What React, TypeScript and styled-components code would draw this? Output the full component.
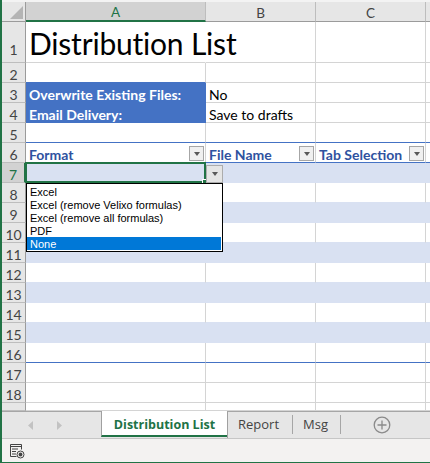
import React from 'react';
import styled, { createGlobalStyle } from 'styled-components';

const GREEN = '#217346';
const GRID = '#d4d4d4';
const BAND = '#d9e1f2';
const ACCENT = '#4472c4';
const TBL = '#4472c4';
const HEAD_BG = '#e6e6e6';
const HEAD_ACTIVE = '#d2d2d2';
const HEAD_LINE = '#bdbdbd';
const HEAD_EDGE = '#9b9b9b';

const Global = createGlobalStyle`
  html, body { margin: 0; padding: 0; background: #fff; }
  body { width: 430px; height: 463px; overflow: hidden; }
  *, *::before, *::after { box-sizing: border-box; }
`;

const Window = styled.div`
  width: 430px;
  height: 463px;
  display: flex;
  flex-direction: column;
  border-left: 2px solid ${GREEN};
  border-bottom: 1px solid ${GREEN};
  padding-top: 2px;
  background: #f3f3f3;
  overflow: hidden;
  font-family: Lato, 'Liberation Sans', sans-serif;
`;

const Sheet = styled.div`
  flex: 1;
  min-height: 0;
  display: grid;
  position: relative;
  overflow: hidden;
  background: #fff;
  grid-template-columns: 24px 180px 110px 110px 1fr;
  grid-template-rows: 20px 41px repeat(17, 20px) 1fr;
`;

const Corner = styled.div`
  background: ${HEAD_BG};
  border-right: 1px solid ${HEAD_EDGE};
  border-bottom: 1px solid ${HEAD_EDGE};
  display: flex;
  align-items: flex-end;
  justify-content: flex-end;
  padding: 0 2px 2px 0;
`;

const ColHead = styled.div<{ $active?: boolean }>`
  background: ${(p) => (p.$active ? HEAD_ACTIVE : HEAD_BG)};
  border-right: 1px solid ${HEAD_LINE};
  border-bottom: ${(p) => (p.$active ? `2px solid ${GREEN}` : `1px solid ${HEAD_EDGE}`)};
  color: ${(p) => (p.$active ? GREEN : '#444')};
  display: flex;
  align-items: center;
  justify-content: center;
  font-size: 13.5px;
  padding-top: 2px;
`;

const RowHead = styled.div<{ $active?: boolean; $tall?: boolean }>`
  background: ${(p) => (p.$active ? HEAD_ACTIVE : HEAD_BG)};
  border-right: ${(p) => (p.$active ? `2px solid ${GREEN}` : `1px solid ${HEAD_EDGE}`)};
  border-bottom: 1px solid ${HEAD_LINE};
  color: ${(p) => (p.$active ? GREEN : '#444')};
  display: flex;
  align-items: flex-end;
  justify-content: center;
  font-size: 14px;
  line-height: 13px;
  padding-bottom: ${(p) => (p.$tall ? 6 : 1)}px;
`;

const Cell = styled.div<{ $fill?: string; $b: string; $r: string; $over?: boolean }>`
  position: relative;
  min-width: 0;
  background: ${(p) => p.$fill ?? '#fff'};
  border-right: 1px solid ${(p) => p.$r};
  border-bottom: 1px solid ${(p) => p.$b};
  display: flex;
  align-items: flex-end;
  justify-content: space-between;
  padding: 0 1px 0 3px;
  white-space: nowrap;
  overflow: ${(p) => (p.$over ? 'visible' : 'hidden')};
  z-index: ${(p) => (p.$over ? 2 : 'auto')};
  font-size: 14px;
  line-height: 13px;
  color: #000;
`;

const Title = styled.span`
  font-size: 30px;
  line-height: 36px;
  letter-spacing: -0.2px;
  color: #000;
  margin-bottom: 1px;
`;

const Label = styled.span<{ $white?: boolean }>`
  font-weight: ${(p) => (p.$white ? 700 : 400)};
  color: ${(p) => (p.$white ? '#fff' : '#000')};
  padding-bottom: 1px;
`;

const HeadText = styled.span`
  font-weight: 700;
  color: #2f52a0;
  padding-bottom: 1px;
`;

const FilterBtn = styled.span`
  width: 15px;
  height: 15px;
  margin-bottom: 1px;
  border: 1px solid #a6a6a6;
  background: #f0f0f0;
  display: flex;
  align-items: center;
  justify-content: center;
  flex-shrink: 0;
  &::after {
    content: '';
    border-left: 3.5px solid transparent;
    border-right: 3.5px solid transparent;
    border-top: 4px solid #595959;
  }
`;

const Selection = styled.span`
  position: absolute;
  left: -1px;
  top: -1px;
  right: -1px;
  bottom: -1px;
  border: 2px solid ${GREEN};
  pointer-events: none;
  &::after {
    content: '';
    position: absolute;
    right: -4px;
    bottom: -4px;
    width: 6px;
    height: 6px;
    background: ${GREEN};
    border: 1px solid #fff;
  }
`;

const Popup = styled.div`
  position: absolute;
  left: 0;
  top: 0;
  width: 100%;
  height: 100%;
  z-index: 5;
`;

const ValidationBtn = styled.span`
  position: absolute;
  left: calc(100% + 1px);
  top: 2px;
  width: 17px;
  height: 18px;
  border: 1px solid #acacac;
  background: #e5e5e5;
  display: flex;
  align-items: center;
  justify-content: center;
  &::after {
    content: '';
    border-left: 3.5px solid transparent;
    border-right: 3.5px solid transparent;
    border-top: 4px solid #595959;
  }
`;

const List = styled.ul`
  position: absolute;
  left: 0;
  top: calc(100% + 1px);
  width: 197px;
  margin: 0;
  padding: 1px 1px 1px 0;
  list-style: none;
  background: #fff;
  border: 1px solid #000;
  font-family: 'Liberation Sans', Arial, sans-serif;
  font-size: 11px;
`;

const Item = styled.li<{ $selected?: boolean }>`
  height: 13px;
  line-height: 14px;
  padding-left: 3px;
  background: ${(p) => (p.$selected ? '#0078d7' : 'transparent')};
  color: ${(p) => (p.$selected ? '#fff' : '#000')};
`;

const TabBar = styled.div`
  height: 28px;
  flex-shrink: 0;
  display: flex;
  background: #e6e6e6;
  border-bottom: 1px solid #c6c6c6;
  font-family: 'Open Sans', 'Liberation Sans', sans-serif;
`;

const NavArea = styled.div`
  width: 99px;
  border-top: 1px solid #a6a6a6;
  display: flex;
  align-items: center;
  padding-left: 26px;
  gap: 22px;
  padding-top: 1px;
`;

const ActiveTab = styled.div`
  width: 126px;
  height: 26px;
  background: #fff;
  border-left: 1px solid #a0a0a0;
  border-bottom: 2px solid ${GREEN};
  color: ${GREEN};
  font-weight: 700;
  font-size: 12.5px;
  display: flex;
  align-items: center;
  justify-content: center;
  padding-top: 2px;
`;

const RestTabs = styled.div`
  flex: 1;
  border-top: 1px solid #a6a6a6;
  border-left: 1px solid #a0a0a0;
  display: flex;
  align-items: center;
  padding-bottom: 1px;
`;

const Tab = styled.div<{ $w: number }>`
  width: ${(p) => p.$w}px;
  color: #444;
  font-size: 13px;
  height: 19px;
  line-height: 19px;
  padding-left: 10px;
  border-right: 1px solid #a6a6a6;
`;

const AddBtn = styled.div`
  margin-left: 32px;
  display: flex;
  align-items: center;
`;

const StatusBar = styled.div`
  height: 23px;
  flex-shrink: 0;
  background: #f3f2f1;
  display: flex;
  align-items: center;
  padding-left: 7px;
`;

const COLS = ['A', 'B', 'C', 'D'] as const;
type Col = (typeof COLS)[number];
const BAND_ROWS = new Set([7, 9, 11, 13, 15]);
const ROWS = Array.from({ length: 19 }, (_, i) => i + 1);

function fillOf(r: number, c: Col): string | undefined {
  if ((r === 3 || r === 4) && c === 'A') return ACCENT;
  if (BAND_ROWS.has(r)) return BAND;
  return undefined;
}

function bottomOf(r: number, c: Col): string {
  if (r === 5 || r === 6 || r === 16) return TBL;
  const f = fillOf(r, c);
  if (f) return f;
  const n = fillOf(r + 1, c);
  if (n) return n;
  return GRID;
}

function rightOf(r: number, c: Col): string {
  if (r === 1 && c === 'A') return 'transparent';
  return fillOf(r, c) ?? GRID;
}

const OPTIONS = ['Excel', 'Excel (remove Velixo formulas)', 'Excel (remove all formulas)', 'PDF', 'None'];

function content(r: number, c: Col): React.ReactNode {
  const key = `${c}${r}`;
  switch (key) {
    case 'A1':
      return <Title>Distribution List</Title>;
    case 'A3':
      return <Label $white>Overwrite Existing Files:</Label>;
    case 'A4':
      return <Label $white>Email Delivery:</Label>;
    case 'B3':
      return <Label>No</Label>;
    case 'B4':
      return <Label>Save to drafts</Label>;
    case 'A6':
      return (
        <>
          <HeadText>Format</HeadText>
          <FilterBtn />
        </>
      );
    case 'B6':
      return (
        <>
          <HeadText>File Name</HeadText>
          <FilterBtn />
        </>
      );
    case 'C6':
      return (
        <>
          <HeadText>Tab Selection</HeadText>
          <FilterBtn />
        </>
      );
    case 'A7':
      return (
        <>
          <Selection />
          <Popup>
            <ValidationBtn />
            <List>
              {OPTIONS.map((o) => (
                <Item key={o} $selected={o === 'None'}>
                  {o}
                </Item>
              ))}
            </List>
          </Popup>
        </>
      );
    default:
      return null;
  }
}

const CornerMark = () => (
  <svg width="13" height="13" viewBox="0 0 13 13">
    <path d="M13 0V13H0Z" fill="#b4b4b4" />
  </svg>
);

const NavArrow = ({ dir }: { dir: 'l' | 'r' }) => (
  <svg width="6" height="9" viewBox="0 0 6 9">
    <path d={dir === 'l' ? 'M5 0V9L0 4.5Z' : 'M1 0V9L6 4.5Z'} fill="#c2c2c2" />
  </svg>
);

const PlusCircle = () => (
  <svg width="18" height="18" viewBox="0 0 18 18" fill="none" stroke="#8a8a8a" strokeWidth="1.3">
    <circle cx="9" cy="9" r="7.8" />
    <path d="M9 4.5v9M4.5 9h9" />
  </svg>
);

const StatusIcon = () => (
  <svg width="16" height="16" viewBox="0 0 16 16" fill="none" stroke="#444" strokeWidth="1">
    <path d="M1.5 1.5h11v5" />
    <path d="M1.5 1.5v12h6" />
    <path d="M1.5 3.5h11" />
    <path d="M3 6h6M3 8.5h4M3 11h4" />
    <circle cx="11.5" cy="11.5" r="3.5" />
    <circle cx="11.5" cy="11.5" r="1.9" fill="#444" stroke="none" />
  </svg>
);

export default function App() {
  return (
    <>
      <Global />
      <Window>
        <Sheet>
          <Corner>
            <CornerMark />
          </Corner>
          {COLS.map((c) => (
            <ColHead key={c} $active={c === 'A'}>
              {c === 'D' ? '' : c}
            </ColHead>
          ))}
          {ROWS.map((r) => (
            <React.Fragment key={r}>
              <RowHead $active={r === 7} $tall={r === 1}>
                {r <= 18 ? r : ''}
              </RowHead>
              {COLS.map((c) => (
                <Cell
                  key={c}
                  $fill={fillOf(r, c)}
                  $b={bottomOf(r, c)}
                  $r={rightOf(r, c)}
                  $over={(r === 1 || r === 7) && c === 'A'}
                >
                  {content(r, c)}
                </Cell>
              ))}
            </React.Fragment>
          ))}
        </Sheet>
        <TabBar>
          <NavArea>
            <NavArrow dir="l" />
            <NavArrow dir="r" />
          </NavArea>
          <ActiveTab>Distribution List</ActiveTab>
          <RestTabs>
            <Tab $w={65}>Report</Tab>
            <Tab $w={48}>Msg</Tab>
            <AddBtn>
              <PlusCircle />
            </AddBtn>
          </RestTabs>
        </TabBar>
        <StatusBar>
          <StatusIcon />
        </StatusBar>
      </Window>
    </>
  );
}
